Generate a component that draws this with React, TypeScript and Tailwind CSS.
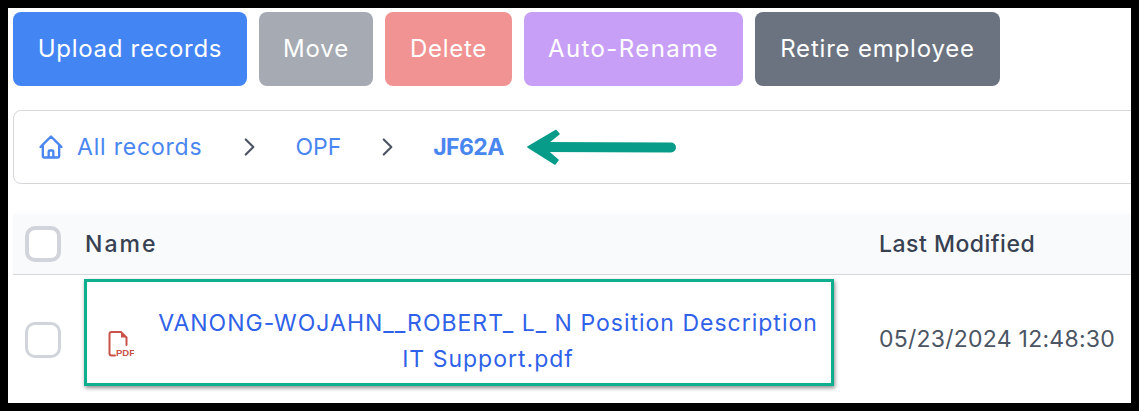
import React from 'react';
import { HiOutlineHome, HiOutlineChevronRight } from 'react-icons/hi';

const font = { fontFamily: 'Inter, "Noto Sans", sans-serif' };

function Checkbox({ thick }: { thick?: boolean }) {
  return (
    <div className={`w-9 h-9 rounded-[10px] bg-white shrink-0 border-[#d1d5db] ${thick ? 'border-[4px]' : 'border-[3px]'}`} />
  );
}

function PdfIcon() {
  return (
    <svg width="26" height="26" viewBox="0 0 26 26" className="text-[#c9534a]">
      <path d="M7 24.5 H3.5 Q1.5 24.5 1.5 22.5 V3 Q1.5 1 3.5 1 H13 L18.5 6.5 V14" fill="none" stroke="currentColor" strokeWidth="2" strokeLinecap="round" />
      <path d="M13 1 V6.5 H18.5 Z" fill="currentColor" />
      <text x="8" y="25" fontSize="9.5" fontWeight="700" fill="currentColor" style={{ fontFamily: '"Liberation Sans", sans-serif' }}>PDF</text>
    </svg>
  );
}

export default function App() {
  return (
    <div className="w-[1139px] h-[411px] bg-black pl-2 pr-2 pt-2 pb-2 overflow-hidden" style={font}>
      <div className="relative w-[1123px] h-[395px] bg-white overflow-hidden">
        <div className="flex pl-[5px] pt-1 h-[78px] text-white text-[24px] font-normal">
          <button className="w-[234px] h-[74px] mr-3 rounded-lg bg-[#4485f4] tracking-[0.7px]">Upload records</button>
          <button className="w-[114px] h-[74px] mr-3 rounded-lg bg-[#a6aab2] tracking-[0.9px]">Move</button>
          <button className="w-[127px] h-[74px] mr-3 rounded-lg bg-[#f19393] tracking-[0.7px]">Delete</button>
          <button className="w-[219px] h-[74px] mr-3 rounded-lg bg-[#c89ff6] tracking-[1.4px]">Auto-Rename</button>
          <button className="w-[245px] h-[74px] rounded-lg bg-[#6b7280] tracking-[0.8px]">Retire employee</button>
        </div>

        <div className="ml-[5px] mt-6 w-[1140px] h-[74px] rounded-lg border border-[#d5d7db] flex items-center pl-6 text-[23px] text-[#4a86f0]">
          <HiOutlineHome className="w-[28px] h-[28px] mr-[12px] -ml-[1px]" />
          <span className="tracking-[0.8px]">All records</span>
          <HiOutlineChevronRight className="w-[26px] h-[26px] text-[#4b5563] ml-[34px] mr-[33px]" />
          <span>OPF</span>
          <HiOutlineChevronRight className="w-[26px] h-[26px] text-[#4b5563] ml-[33px] mr-[33px]" />
          <span className="font-bold tracking-[-0.6px]">JF62A</span>
        </div>

        <svg className="absolute left-[519px] top-[120px]" width="152" height="38" viewBox="0 0 152 38">
          <path d="M144 19.5 L14 19" stroke="#079c89" strokeWidth="10" strokeLinecap="round" fill="none" />
          <path d="M1 19 L29 2.5 L32 6 L16 19 L31 32 L28 36 Z" fill="#079c89" stroke="#079c89" strokeWidth="1.5" strokeLinejoin="round" />
        </svg>

        <div className="ml-[5px] mt-[30px] h-[61px] bg-[#f9fafb] border-b border-[#d5d7db] flex items-center pl-3 text-[23px] text-[#374151] font-medium">
          <Checkbox thick />
          <span className="ml-6 w-[794px] tracking-[2px]">Name</span>
          <span className="tracking-[0.5px]">Last Modified</span>
        </div>

        <div className="ml-[5px] h-[129px] flex items-center pl-3">
          <Checkbox />
          <div className="ml-[47px] mt-[8px] w-[26px] shrink-0">
            <PdfIcon />
          </div>
          <a className="w-[690px] ml-[9px] pt-[2px] text-center text-[23px] leading-9 tracking-[1px] text-[#2f62e8]">
            VANONG-WOJAHN__ROBERT_ L_ N Position Description IT Support.pdf
          </a>
          <span className="ml-[46px] whitespace-nowrap text-[23px] tracking-[0.25px] text-[#4b5563]">05/23/2024 12:48:30</span>
        </div>

        <div className="absolute left-[76px] top-[271px] w-[750px] h-[107px] border-[3px] border-[#0fae8e] shadow-[1px_2px_4px_rgba(0,0,0,0.45)]" />
      </div>
    </div>
  );
}
